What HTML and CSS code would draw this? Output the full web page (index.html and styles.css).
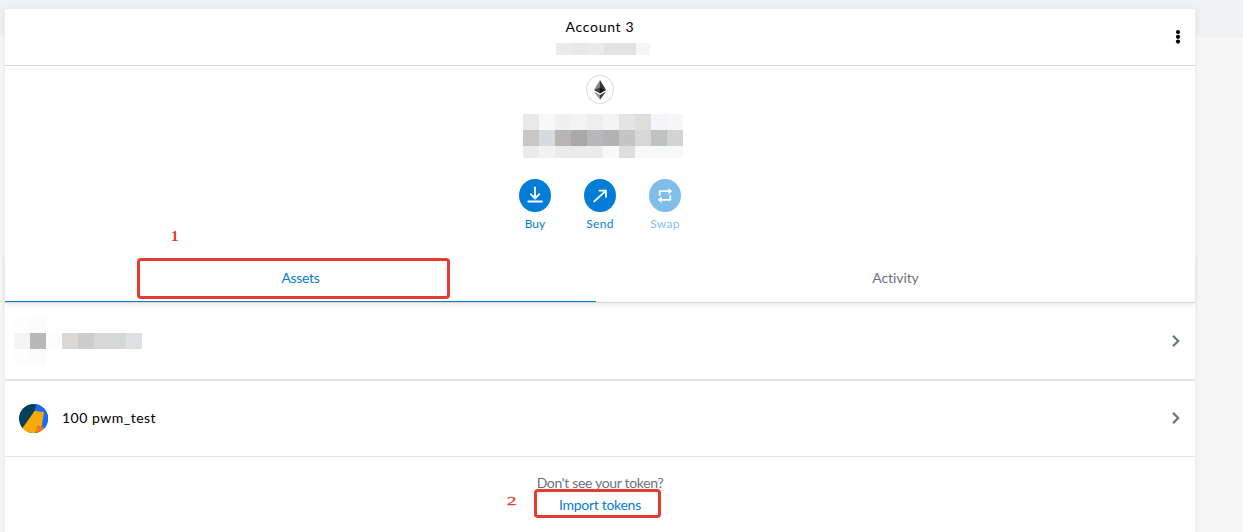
FILE: index.html
```html
<!DOCTYPE html>
<html lang="en">
<head>
<meta charset="utf-8">
<title>Account 3</title>
<link rel="stylesheet" href="styles.css">
</head>
<body>
<main class="wallet">
  <header class="menu-bar">
    <div class="account">
      <div class="account-name"><span class="t-account">Account 3</span></div>
      <div class="address mosaic"><i class="c1"></i><i class="c2"></i><i class="c3"></i><i class="c4"></i><i class="c5"></i><i class="c6"></i></div>
    </div>
    <svg class="kebab" width="6" height="16" viewBox="0 0 6 16"><circle cx="3" cy="3" r="2.1"/><circle cx="3" cy="7.8" r="2.1"/><circle cx="3" cy="12.6" r="2.1"/></svg>
  </header>
  <section class="overview">
    <div class="eth">
      <svg width="14" height="20" viewBox="0 0 14 20"><path fill="#828384" d="M7 0 1 10 7 7.4Z"/><path fill="#343434" d="M7 0v7.4L13 10Z"/><path fill="#3c3c3b" d="M7 7.2 1 10 7 13.6Z"/><path fill="#141414" d="M7 7.2 13 10 7 13.6Z"/><path fill="#8c8c8c" d="M1 11.5 7 15v4.7Z"/><path fill="#3c3c3b" d="M13 11.5 7 15v4.7Z"/></svg>
    </div>
    <svg class="balance" width="160" height="44" viewBox="0 0 160 44" shape-rendering="crispEdges">
      <g><path fill="#e9e9e9" d="M0 0h16v16H0z"/><path fill="#f8f8f8" d="M16 0h16v16H16z"/><path fill="#eef0f2" d="M32 0h16v16H32z"/><path fill="#f3f3f1" d="M48 0h16v16H48z"/><path fill="#eee" d="M64 0h16v16H64z"/><path fill="#f4f4f2" d="M80 0h16v16H80z"/><path fill="#e4e4e4" d="M96 0h16v16H96z"/><path fill="#dfdedc" d="M112 0h16v16h-16z"/><path fill="#f3f5f8" d="M128 0h16v16h-16z"/><path fill="#f7f7f7" d="M144 0h16v16h-16z"/></g>
      <g><path fill="#cbc6c3" d="M0 16h16v16H0z"/><path fill="#d6dbde" d="M16 16h16v16H16z"/><path fill="#b7b5b3" d="M32 16h16v16H32z"/><path fill="#aba8a9" d="M48 16h16v16H48z"/><path fill="#b6b8bc" d="M64 16h16v16H64z"/><path fill="#b3b3b3" d="M80 16h16v16H80z"/><path fill="#c6c5c3" d="M96 16h16v16H96z"/><path fill="#d7d7d7" d="M112 16h16v16h-16z"/><path fill="#c0c2c1" d="M128 16h16v16h-16z"/><path fill="#d2d4d3" d="M144 16h16v16h-16z"/></g>
      <g><path fill="#ebebeb" d="M0 32h16v12H0zM32 32h32v12H32z"/><path fill="#f2f2f0" d="M16 32h16v12H16z"/><path fill="#ebedec" d="M64 32h16v12H64z"/><path fill="#f9f9f9" d="M80 32h16v12H80z"/><path fill="#dedede" d="M96 32h16v12H96z"/><path fill="#f7f9f8" d="M112 32h48v12h-48z"/></g>
    </svg>
    <nav class="actions">
      <a class="action"><svg width="32" height="33" viewBox="0 0 32 33"><ellipse cx="16" cy="16.5" rx="16" ry="16.5"/><path d="M16 8.3v11M11.8 15.2 16 19.6l4.2-4.4M9.3 22.5h13.6"/></svg><span class="t-buy">Buy</span></a>
      <a class="action"><svg width="32" height="33" viewBox="0 0 32 33"><ellipse cx="16" cy="16.5" rx="16" ry="16.5"/><path d="M10.3 22.3 22 11.6M15.5 11.6H22v6.2"/></svg><span class="t-send">Send</span></a>
      <a class="action disabled"><svg width="32" height="33" viewBox="0 0 32 33"><ellipse cx="16" cy="16.5" rx="16" ry="16.5"/><path d="M10.7 16v-3.8h10M21.3 17v3.8h-10"/><path class="tip" d="M19.4 8.9 23.2 12.2l-3.8 3.3zM12.6 17.5 8.8 20.8l3.8 3.3z"/></svg><span class="t-swap">Swap</span></a>
    </nav>
  </section>
  <nav class="tabs">
    <div class="tab active"><span class="t-assets">Assets</span></div>
    <div class="tab"><span class="t-activity">Activity</span></div>
  </nav>
  <div class="asset first">
    <svg class="hidden-asset" width="128" height="48" viewBox="0 0 128 48" shape-rendering="crispEdges"><path fill="#fdfdfd" d="M0 0h16v16H0zM0 32h16v16H0zM32 16h16v16H32z"/><path fill="#fbfbfb" d="M16 0h16v16H16zM16 32h16v16H16z"/><path fill="#f5f5f5" d="M0 16h16v16H0z"/><path fill="#b8b8b8" d="M16 16h16v16H16z"/><path fill="#dad9d7" d="M48 16h16v16H48z"/><path fill="#cdcdcd" d="M64 16h16v16H64z"/><path fill="#d7d7d9" d="M80 16h16v16H80z"/><path fill="#d6d8d5" d="M96 16h16v16H96z"/><path fill="#dde1e2" d="M112 16h16v16h-16z"/></svg>
    <svg class="chevron" width="10" height="14" viewBox="0 0 10 14"><path d="M2 1.8 7.2 7 2 12.2"/></svg>
  </div>
  <div class="asset second">
    <svg class="token" width="29" height="29" viewBox="0 0 29 29"><defs><clipPath id="disc"><circle cx="14.5" cy="14.5" r="14.5"/></clipPath></defs><g clip-path="url(#disc)"><path fill="#03405c" d="M0 0h29v29H0z"/><path fill="#1b6bfa" d="M17.5 0H29v29H12L16 5z"/><path fill="#fc7707" d="M19 21.5 25.5 24 22 29h-6z"/><path fill="#faaa05" d="M15.7 6.8 25 8.2 22.5 23 19 21.3 16 29H0z"/></g></svg>
    <span class="amount"><span class="t-amount">100 pwm_test</span></span>
    <svg class="chevron" width="10" height="14" viewBox="0 0 10 14"><path d="M2 1.8 7.2 7 2 12.2"/></svg>
  </div>
  <footer class="import">
    <div class="question"><span class="t-question">Don't see your token?</span></div>
    <div class="link"><span class="t-import">Import tokens</span></div>
  </footer>
</main>
<div class="mark mark-assets"></div>
<div class="mark mark-import"></div>
<span class="step step-one">1</span>
<span class="step step-two">2</span>
</body>
</html>
```
FILE: styles.css
```css
* { box-sizing: border-box; }
body {
  margin: 0;
  height: 532px;
  padding: 9px 0 0 5px;
  overflow: hidden;
  position: relative;
  background: linear-gradient(#f1f2f4 37px, #f7f7f7 37px);
  font-family: Lato, "Open Sans", sans-serif;
  font-size: 14px;
  line-height: 20px;
  color: #000;
}
.wallet {
  width: 1190px;
  height: 540px;
  background: #fff;
  box-shadow: 0 0 7px rgba(0, 0, 0, .08);
}
.menu-bar {
  height: 57px;
  border-bottom: 1px solid #d6d6d6;
  display: grid;
  grid-template-columns: 1fr 6px;
  padding: 8px 14px 0 20px;
}
.account { display: flex; flex-direction: column; align-items: center; }
.account-name { height: 26px; }
.mosaic { display: flex; width: 94px; height: 12px; margin-left: 5px; }
.mosaic i { width: 16px; height: 12px; }
.mosaic .c1 { background: #ebebe9; }
.mosaic .c2 { background: #e7e9e8; }
.mosaic .c3 { background: #ebebeb; }
.mosaic .c4 { background: #e3e3e1; }
.mosaic .c5 { background: #e1e2e4; }
.mosaic .c6 { background: #f6f6f6; width: 14px; }
.kebab { margin-top: 12px; }
.overview { height: 190px; padding-top: 9px; display: flex; flex-direction: column; align-items: center; }
.eth {
  width: 28px;
  height: 29px;
  border: 1px solid #dcdcdc;
  border-radius: 50%;
  display: flex;
  align-items: center;
  justify-content: center;
}
.balance { margin: 10px 0 0 6px; flex: none; }
.actions { display: flex; gap: 33px; margin-top: 21px; }
.action {
  width: 32px;
  display: flex;
  flex-direction: column;
  align-items: center;
  gap: 2px;
  color: #037dd6;
  font-size: 12px;
}
.action ellipse { fill: #037dd6; }
.action path { fill: none; stroke: #fff; stroke-width: 1.8; stroke-linecap: round; stroke-linejoin: round; }
.action .tip { fill: #fff; stroke: none; }
.disabled { opacity: .5; }
.tabs { height: 47px; display: flex; border-bottom: 1px solid #d6d8d7; box-shadow: 0 2px 4px rgba(0, 0, 0, .08); clip-path: inset(0 -4px -8px -4px); }
.tab { flex: 1; height: 46px; padding-top: 12px; text-align: center; color: #6a737d; }
.tab.active { flex: 0 0 591px; color: #037dd6; border-bottom: 1px solid #037dd6; }
.asset { display: flex; align-items: center; }
.asset.first { height: 78px; padding: 0 14px 0 9px; border-bottom: 2px solid #e3e3e3; }
.asset.second { height: 76px; padding: 0 14px; border-bottom: 1px solid #e3e3e3; }
.amount { margin: -2px 0 0 14px; }
.chevron { margin-left: auto; fill: none; stroke: #6a737d; stroke-width: 2.2; }
.second .chevron { margin-top: -2px; }
.import { text-align: center; line-height: 22px; padding-top: 15px; }
.question { color: #6a737d; }
.link { color: #037dd6; }
.mark { position: absolute; border: 3px solid #e63b30; border-radius: 4px; }
.mark-assets { left: 137px; top: 258px; width: 313px; height: 41px; }
.mark-import { left: 534px; top: 489px; width: 127px; height: 29px; }
.step { position: absolute; color: #e63b30; font-family: "Liberation Serif", serif; font-size: 15px; font-weight: bold; line-height: 16px; }
.step-one { left: 171px; top: 228px; }
.step-two { left: 507px; top: 493px; font-size: 14px; font-weight: normal; transform: scale(1.35, .9); transform-origin: left; -webkit-text-stroke: .3px #e63b30; }
.t-account { letter-spacing: .7px; }
.t-amount { letter-spacing: .5px; }
.t-assets, .t-import { letter-spacing: -.3px; }
.t-question { letter-spacing: -.33px; }
.t-activity { letter-spacing: -.1px; }
.t-send { letter-spacing: .3px; }
.t-swap { letter-spacing: .3px; }
```
